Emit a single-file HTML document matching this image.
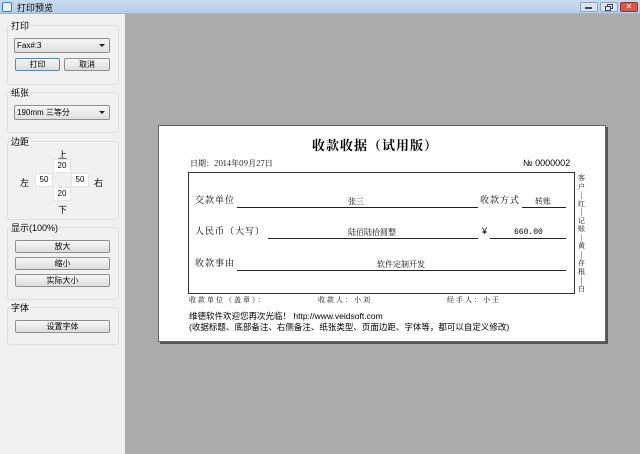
<!DOCTYPE html>
<html><head><meta charset="utf-8"><style>
*{margin:0;padding:0;box-sizing:border-box}
body{width:640px;height:454px;overflow:hidden;position:relative;background:#ababab;font-family:"Liberation Sans","Noto Sans CJK SC",sans-serif;font-size:9px;color:#000}
.a{position:absolute}
.tb{left:0;top:0;width:640px;height:14px;background:linear-gradient(#c9dbef,#b7cde6);border-bottom:1px solid #9fb6d0}
.side{left:0;top:14px;width:125px;height:440px;background:#f0f0f0}
.grp{position:absolute;left:7px;width:112px;border:1px solid #dcdcdc;border-radius:3px}
.lbl{position:absolute;font-size:9px;background:#f0f0f0;padding-right:2px}
.btn{position:absolute;height:13px;border:1px solid #8e8f8f;border-radius:2px;background:linear-gradient(#f6f6f6,#dcdcdc);text-align:center;font-size:8px;line-height:11px}
.cmb{position:absolute;left:14px;width:96px;height:15px;border:1px solid #8e8f8f;border-radius:2px;background:linear-gradient(#f6f6f6,#e0e0e0);font-size:8px;line-height:13px;padding-left:2px}
.cmb:after{content:"";position:absolute;right:4px;top:5px;border:3px solid transparent;border-top:3px solid #222}
.in{position:absolute;width:18px;height:14px;background:#fff;border:1px solid #e3e3e3;text-align:center;font-size:8px;line-height:12px}
.paper{left:158px;top:125px;width:448px;height:217px;background:#fff;border:1px solid #666;box-shadow:2px 2px 0 #555}
.s{font-family:"Noto Serif CJK SC","Liberation Serif",serif}
.ln{position:absolute;height:1px;background:#222}
</style></head><body>
<div class="a tb"></div>
<div class="a" style="left:2px;top:2px;width:10px;height:10px;border:1px solid #3a7bc8;border-radius:2px;background:#e8f4ff"></div>
<div class="a" style="left:17px;top:1px;font-size:9px">打印预览</div>
<div class="a" style="left:580px;top:2px;width:18px;height:10px;border:1px solid #8aa3c0;border-radius:2px;background:#d8e4f2"></div>
<div class="a" style="left:585px;top:7px;width:7px;height:2px;background:#445"></div>
<div class="a" style="left:600px;top:2px;width:18px;height:10px;border:1px solid #8aa3c0;border-radius:2px;background:#d8e4f2"></div>
<div class="a" style="left:607px;top:4px;width:6px;height:5px;border:1px solid #445"></div>
<div class="a" style="left:605px;top:6px;width:6px;height:5px;border:1px solid #445;background:#d8e4f2"></div>
<div class="a" style="left:620px;top:2px;width:18px;height:10px;border:1px solid #8a3a30;border-radius:2px;background:#d9564a;color:#fff;font-size:8px;line-height:8px;text-align:center">✕</div>
<div class="a side"></div>

<div class="grp" style="top:25px;height:60px"></div><div class="lbl" style="left:11px;top:19px">打印</div>
<div class="cmb" style="top:38px">Fax#:3</div>
<div class="btn" style="left:15px;top:58px;width:45px;border-color:#3c8fd6">打印</div>
<div class="btn" style="left:64px;top:58px;width:46px">取消</div>

<div class="grp" style="top:92px;height:41px"></div><div class="lbl" style="left:11px;top:86px">纸张</div>
<div class="cmb" style="top:105px">190mm 三等分</div>

<div class="grp" style="top:141px;height:79px"></div><div class="lbl" style="left:11px;top:135px">边距</div>
<div class="a" style="left:58px;top:148px">上</div>
<div class="in" style="left:53px;top:159px">20</div>
<div class="a" style="left:20px;top:176px">左</div>
<div class="in" style="left:35px;top:173px">50</div>
<div class="in" style="left:71px;top:173px">50</div>
<div class="a" style="left:94px;top:176px">右</div>
<div class="in" style="left:53px;top:187px">20</div>
<div class="a" style="left:58px;top:203px">下</div>

<div class="grp" style="top:227px;height:73px"></div><div class="lbl" style="left:11px;top:221px">显示(100%)</div>
<div class="btn" style="left:15px;top:240px;width:95px">放大</div>
<div class="btn" style="left:15px;top:257px;width:95px">缩小</div>
<div class="btn" style="left:15px;top:274px;width:95px">实际大小</div>

<div class="grp" style="top:307px;height:38px"></div><div class="lbl" style="left:11px;top:301px">字体</div>
<div class="btn" style="left:15px;top:320px;width:95px">设置字体</div>

<div class="a paper"></div>
<div class="a s" style="left:312px;top:135px;font-size:13px;font-weight:bold;letter-spacing:1px">收款收据（试用版）</div>
<div class="a s" style="left:190px;top:158px;font-size:8px">日期：2014年09月27日</div>
<div class="a" style="left:523px;top:158px;font-size:9px">№ 0000002</div>
<div class="a" style="left:188px;top:172px;width:387px;height:122px;border:1px solid #333"></div>
<div class="a s" style="left:195px;top:193px;font-size:9px;letter-spacing:1px">交款单位</div>
<div class="ln" style="left:237px;top:207px;width:241px"></div>
<div class="a s" style="left:348px;top:196px;font-size:8px">张三</div>
<div class="a s" style="left:480px;top:193px;font-size:9px;letter-spacing:1px">收款方式</div>
<div class="ln" style="left:522px;top:207px;width:44px"></div>
<div class="a s" style="left:535px;top:196px;font-size:8px">转账</div>
<div class="a s" style="left:195px;top:224px;font-size:9px;letter-spacing:1px">人民币（大写）</div>
<div class="ln" style="left:268px;top:238px;width:210px"></div>
<div class="a s" style="left:348px;top:227px;font-size:8px">陆佰陆拾圆整</div>
<div class="a" style="left:482px;top:226px;font-size:9px">¥</div>
<div class="ln" style="left:490px;top:238px;width:76px"></div>
<div class="a" style="left:514px;top:228px;font-size:8px;font-family:'Liberation Mono',monospace">660.00</div>
<div class="a s" style="left:195px;top:256px;font-size:9px;letter-spacing:1px">收款事由</div>
<div class="ln" style="left:237px;top:270px;width:329px"></div>
<div class="a s" style="left:377px;top:259px;font-size:8px">软件定制开发</div>
<div class="a s" style="left:577px;top:174px;width:9px;font-size:7px;line-height:8.5px;text-align:center">客<br>户<br>|<br>红<br>|<br>记<br>账<br>|<br>黄<br>|<br>存<br>根<br>|<br>白</div>
<div class="a s" style="left:189px;top:295px;font-size:7px;letter-spacing:2px">收款单位（盖章）：</div>
<div class="a s" style="left:318px;top:295px;font-size:7px;letter-spacing:2px">收款人：小刘</div>
<div class="a s" style="left:447px;top:295px;font-size:7px;letter-spacing:2px">经手人：小王</div>
<div class="a" style="left:189px;top:310px;font-size:8.5px">维德软件欢迎您再次光临！ http://www.veidsoft.com</div>
<div class="a" style="left:189px;top:321px;font-size:8.5px">(收据标题、底部备注、右侧备注、纸张类型、页面边距、字体等，都可以自定义修改)</div>
</body></html>
